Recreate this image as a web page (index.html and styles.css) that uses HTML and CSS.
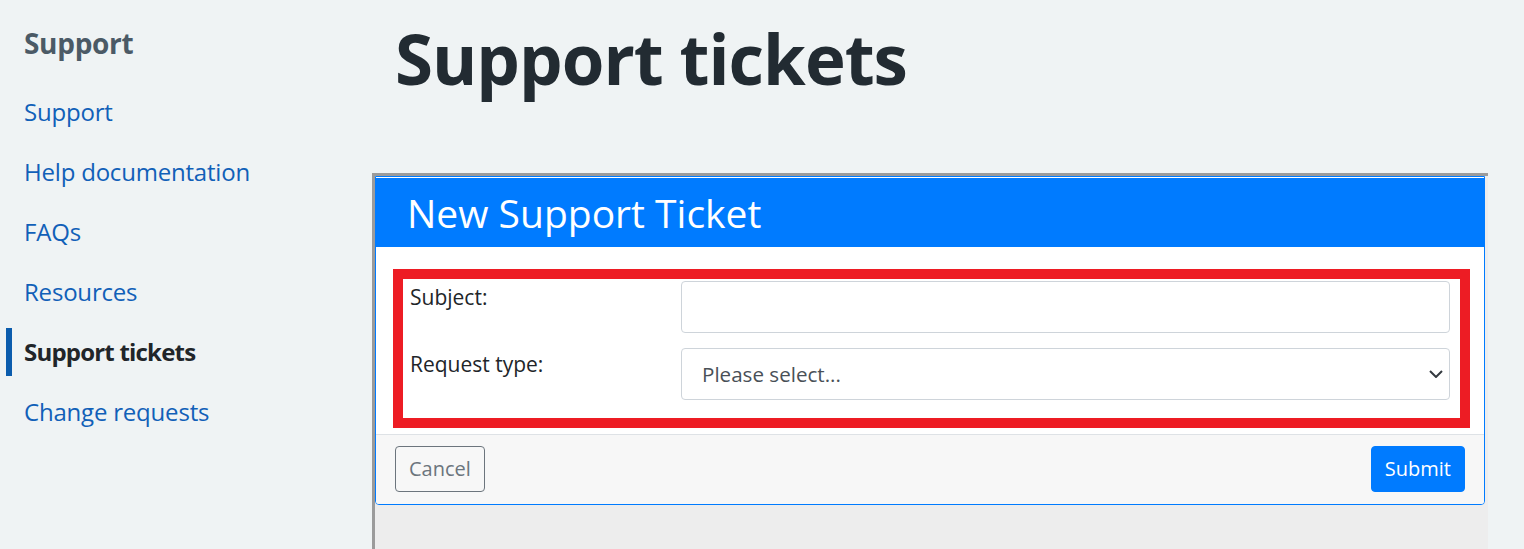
FILE: index.html
```html
<!DOCTYPE html>
<html lang="en">
<head>
<meta charset="utf-8">
<title>Support tickets</title>
<link rel="stylesheet" href="styles.css">
</head>
<body>
<div class="page">
  <aside class="sidebar">
    <h2 class="sidebar-title">Support</h2>
    <nav class="side-nav">
      <a class="side-link" href="#">Support</a>
      <a class="side-link" href="#">Help documentation</a>
      <a class="side-link" href="#">FAQs</a>
      <a class="side-link" href="#">Resources</a>
      <a class="side-link active" href="#">Support tickets</a>
      <a class="side-link" href="#">Change requests</a>
    </nav>
  </aside>
  <main class="main">
    <h1 class="page-title">Support tickets</h1>
    <div class="frame">
      <div class="modal">
        <div class="modal-header">
          <h3 class="modal-title">New Support Ticket</h3>
        </div>
        <div class="modal-body">
          <div class="highlight">
            <div class="form-grid">
              <label class="form-label" for="subject">Subject:</label>
              <input class="form-control" id="subject" type="text">
              <label class="form-label" for="rtype">Request type:</label>
              <div class="select-wrap">
                <select class="form-control form-select" id="rtype">
                  <option>Please select...</option>
                </select>
                <svg class="chevron" width="14" height="8" viewBox="0 0 14 8" aria-hidden="true"><path d="M1 1l6 6 6-6" fill="none" stroke="#343a40" stroke-width="2"/></svg>
              </div>
            </div>
          </div>
        </div>
        <div class="modal-footer">
          <button class="btn btn-outline" type="button">Cancel</button>
          <button class="btn btn-primary" type="button">Submit</button>
        </div>
      </div>
    </div>
  </main>
</div>
</body>
</html>
```
FILE: styles.css
```css
* { box-sizing: border-box; }
html, body { margin: 0; height: 100%; }
body {
  background: #eff3f4;
  font-family: "Open Sans", "Noto Sans", sans-serif;
  color: #212529;
  overflow: hidden;
}
.page {
  display: flex;
  height: 549px;
}
.sidebar {
  width: 372px;
  flex: none;
  padding: 23px 0 0 6px;
}
.sidebar-title {
  margin: 0 0 25px 18px;
  font-size: 28px;
  line-height: 40px;
  font-weight: 700;
  letter-spacing: -0.3px;
  color: #4b5a66;
}
.side-nav {
  display: flex;
  flex-direction: column;
  gap: 12px;
}
.side-link {
  display: block;
  height: 48px;
  line-height: 48px;
  font-size: 24px;
  letter-spacing: -0.2px;
  color: #1160b8;
  text-decoration: none;
  border-left: 6px solid transparent;
  padding-left: 12px;
}
.side-link.active {
  border-left-color: #0b5cad;
  color: #212529;
  font-weight: 700;
  letter-spacing: -0.8px;
}
.main {
  flex: 1;
  padding-right: 36px;
  display: flex;
  flex-direction: column;
}
.page-title {
  margin: 24px 0 81px 23px;
  font-size: 69px;
  line-height: 68px;
  font-weight: 700;
  letter-spacing: -1px;
  color: #222b32;
}
.frame {
  flex: 1;
  background: #ededed;
  border-top: 3px solid #9b9b9b;
  border-left: 3px solid #9b9b9b;
  padding-right: 3px;
}
.modal {
  background: #fff;
  border: 1px solid #007bff;
  border-radius: 0 0 4px 4px;
  overflow: hidden;
}
.modal-header {
  height: 70px;
  background: #007bff;
  display: flex;
  align-items: center;
  padding-left: 31px;
  border-top: 1px solid #fff;
}
.modal-title {
  margin: 0;
  font-size: 39px;
  font-weight: 400;
  color: #fff;
}
.modal-body {
  padding: 22px 14px 6px 17px;
}
.highlight {
  border: 10px solid #ed1c24;
  padding: 2px 10px 18px 7px;
}
.form-grid {
  display: grid;
  grid-template-columns: 271px 1fr;
  row-gap: 15px;
}
.form-label {
  font-size: 21px;
  line-height: 28px;
  color: #212529;
  padding-top: 2px;
}
.form-control {
  display: block;
  width: 100%;
  height: 52px;
  border: 1px solid #ced4da;
  border-radius: 4px;
  background: #fff;
  font-family: inherit;
  font-size: 20.6px;
  color: #495057;
  padding: 0 20px;
  margin: 0;
}
.form-select {
  appearance: none;
  -webkit-appearance: none;
}
.select-wrap {
  position: relative;
}
.chevron {
  position: absolute;
  right: 7px;
  top: 22px;
  pointer-events: none;
}
.modal-footer {
  background: #f7f7f7;
  border-top: 1px solid #dee2e6;
  padding: 11px 19px 12px 19px;
  display: flex;
  justify-content: space-between;
}
.btn {
  height: 46px;
  font-family: inherit;
  font-size: 20px;
  line-height: 26px;
  padding: 0 13px;
  border-radius: 4px;
  border: 1px solid transparent;
  cursor: pointer;
}
.btn-outline {
  background: transparent;
  border-color: #6c757d;
  color: #6c757d;
}
.btn-primary {
  background: #007bff;
  border-color: #007bff;
  color: #fff;
}
```
